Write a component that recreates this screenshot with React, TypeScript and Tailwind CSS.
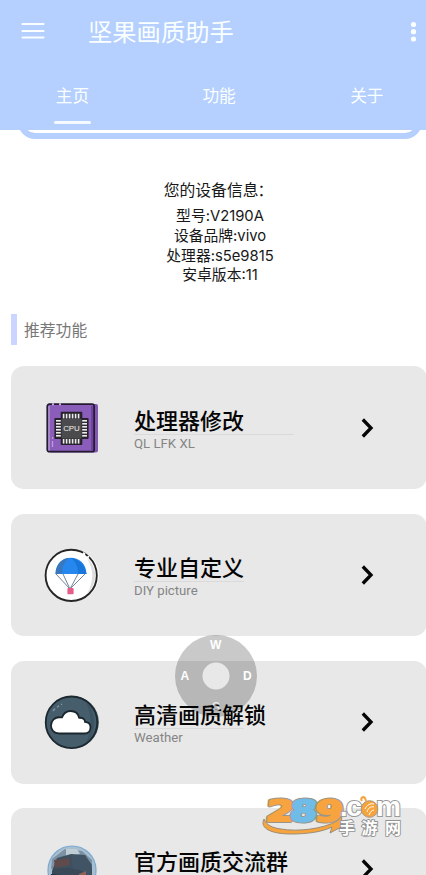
import type { ReactNode } from "react";

const cjk = "font-['Noto_Sans_CJK_SC',sans-serif]";

function CpuIcon() {
  const pins = [0, 1, 2, 3, 4, 5];
  return (
    <svg width="56" height="56" viewBox="0 0 56 56">
      <rect x="5" y="4" width="49" height="48.5" rx="2" fill="#8257b0" />
      <rect x="3.3" y="4.2" width="46.8" height="47.5" rx="2" fill="#8a5dba" stroke="#241b31" strokeWidth="1.8" />
      <path d="M5 6V50.5" stroke="#b29acb" strokeWidth="1.4" />
      <path d="M48 6V50.5" stroke="#7043a0" strokeWidth="2" />
      <path d="M8 4.2h2M15 4.2h2" stroke="#c7a9e6" strokeWidth="2" />
      <path d="M8.5 37v2M8.5 41v6" stroke="#b99bd9" strokeWidth="1.3" />
      <path d="M17.5 12.5h20v6.3h6.3v19.5h-6.3v6h-20v-6h-6.3V18.8h6.3z" fill="#302c35" stroke="#252029" strokeWidth="1.6" strokeLinejoin="round" />
      {pins.map((n) => (
        <g key={n} fill="#ececea">
          <rect x={18.8 + n * 3} y="13.8" width="1.6" height="4.6" />
          <rect x={18.8 + n * 3} y="39" width="1.6" height="4.6" />
          <rect x="12" y={20 + n * 3} width="4.8" height="1.6" />
          <rect x="38.2" y={20 + n * 3} width="4.8" height="1.6" />
        </g>
      ))}
      <rect x="17.6" y="19" width="20" height="19.5" fill="#4b4b4d" />
      <text x="27.5" y="31.2" textAnchor="middle" fontSize="7.9" fontFamily="Liberation Sans" fill="#f4f4f4">CPU</text>
    </svg>
  );
}

function ParachuteIcon() {
  return (
    <svg width="56" height="56" viewBox="0 0 56 56">
      <circle cx="29.5" cy="28.3" r="25.6" fill="#fafafa" />
      <circle cx="27.2" cy="28.4" r="25.6" fill="#fff" stroke="#262626" strokeWidth="1.9" />
      <path d="M43 11c11 10 11 25 0 36 7-13 7-24 0-36Z" fill="#dedede" />
      <path d="m39 6 2 1.6M43.5 9.3l1.2 1.3" stroke="#fff" strokeWidth="2.4" />
      <path d="m12 27 14 15 15-15M19 27l7 15 8-15" fill="none" stroke="#72859c" strokeWidth="1" />
      <path d="M11.5 27C12 5 42 6 42.5 27Z" fill="#2687ee" />
      <path d="M11.5 27C12 15 20 11 25 11c-5 4-7 9-7 16Z" fill="#3a78bd" />
      <path d="M27 11c8 1 14 7 15.5 16H34c0-7-2-12-7-16Z" fill="#1976da" />
      <rect x="23.4" y="41" width="6.2" height="6.2" rx="1" fill="#e75c89" />
    </svg>
  );
}

function CloudIcon() {
  return (
    <svg width="56" height="56" viewBox="0 0 56 56">
      <circle cx="28.8" cy="28.3" r="26.1" fill="#53616b" />
      <circle cx="27.5" cy="28.3" r="25.8" fill="#465d6b" stroke="#1c2930" strokeWidth="1.8" />
      <path d="M42 8c11 10 11 31 0 41 6-13 6-28 0-41Z" fill="#3c5463" />
      <path d="m9 17 2-2.4m2-1.4 2-1.5m2-1 1-.6" stroke="#8199a9" strokeWidth="1.4" />
      <path d="M15 39.5c-5 0-8-3.4-8-8 0-4.8 4-8.6 9-8.2h2c1.6-4.1 4.4-6.3 8.6-6.3 4.6 0 7.8 2.7 8.5 6.8 3.9-.5 5.9 1.8 5.9 4.1 3.6.3 5.5 2.5 5.5 5.4 0 3.7-2.5 6.2-6 6.2Z" fill="#fff" stroke="#1a272e" strokeWidth="1.8" strokeLinejoin="round" />
    </svg>
  );
}

function HelmetIcon() {
  return (
    <svg width="56" height="56" viewBox="0 0 56 56">
      <defs><clipPath id="portrait"><circle cx="28" cy="29" r="24" /></clipPath></defs>
      <g clipPath="url(#portrait)">
        <path fill="#a7bfce" d="M0 0h56v56H0z" />
        <path d="m8 18 13-10 17 2 10 9v9H7z" fill="#7c91a3" />
        <path d="m22 8 11 0 3 5-14 3z" fill="#c0cdd4" />
        <path d="m8 30 5-13 14-4 14 1 7 13v11H8z" fill="#3e505f" />
        <path d="m10 19 15-2 1 7-15 3z" fill="#604b4c" />
        <path d="m27 14 14 0 7 10-2 10-17-6z" fill="#405466" />
        <path d="m9 28 16-1 14 3v4L25 37 8 34z" fill="#394958" />
        <path d="m35 33 7-3v9h-7z" fill="#8c6355" />
        <path d="m7 33 28 3 2 7H5z" fill="#242e38" />
      </g>
      <circle cx="28" cy="29" r="24" fill="none" stroke="#7daad2" strokeWidth="1.2" />
    </svg>
  );
}

type FeatureProps = { title: string; subtitle: string; icon: ReactNode; line?: string };

function FeatureCard({ title, subtitle, icon, line = "w-[110px]" }: FeatureProps) {
  return (
    <button className="flex h-[122.7px] w-[416px] shrink-0 items-center rounded-[13px] bg-[#e8e8e8] text-left">
      <span className="ml-[33px] h-14 w-14 shrink-0">{icon}</span>
      <span className="ml-[34px] flex w-[215px] flex-col pt-[3px]">
        <span className={`${cjk} h-[29px] text-[22px] font-medium leading-[29px] text-[#050505]`}>{title}</span>
        <span className={`${line} h-px bg-[#dadada]`} />
        <span className="h-[19px] font-['Roboto','Liberation_Sans',sans-serif] text-[13.2px] leading-[18px] text-[#858585]">{subtitle}</span>
      </span>
      <svg className="ml-[11px]" width="16" height="22" viewBox="0 0 16 22" fill="none"><path d="m2.8 2.5 8.2 8.5-8.2 8.5" stroke="#050505" strokeWidth="3.3" /></svg>
    </button>
  );
}

function Joystick() {
  return (
    <div className="absolute left-[175px] top-[635px] h-[82px] w-[82px] font-['Liberation_Sans',sans-serif] text-[12px] font-bold leading-3 text-white">
      <svg className="absolute inset-0" width="82" height="82" viewBox="0 0 82 82">
        <path fillRule="evenodd" d="M0 41a41 41 0 1 0 82 0A41 41 0 1 0 0 41Zm27.5 0a13.5 13.5 0 1 1 27 0 13.5 13.5 0 1 1-27 0Z" fill="#000" fillOpacity=".21" />
      </svg>
      <span className="absolute left-[35px] top-[4px]">W</span>
      <span className="absolute left-[5.5px] top-[35px]">A</span>
      <span className="absolute left-[68px] top-[35px]">D</span>
      <span className="absolute left-[37px] top-[66px] opacity-70">S</span>
    </div>
  );
}

function Watermark() {
  const digits = [
    { value: "2", x: 4, width: 28, color: "#f6a340" },
    { value: "8", x: 28, width: 27, color: "#70bce8" },
    { value: "9", x: 53, width: 28, color: "#f6a340" },
  ];
  return (
    <svg className="absolute left-[262px] top-[796px]" width="142" height="42" viewBox="0 0 142 42">
      <path d="M2 23c-5 10 9 15 27 15 16 0 31-2 41-7l-2 6 11-6 1-13-5 7c-14 8-40 11-56 8-8-1-15-4-17-10Z" fill="#f7a43d" stroke="#9b8d7d" strokeWidth="1" />
      <g fontFamily="DejaVu Sans" fontSize="29" fontWeight="bold" transform="translate(2 0) skewX(-6)" strokeLinejoin="round">
        {digits.map(({ value, x, width, color }) => (
          <g key={value}>
            <text x={x} y="25" textLength={width} lengthAdjust="spacingAndGlyphs" fill={color} stroke="#999589" strokeWidth="4">{value}</text>
            <text x={x} y="25" textLength={width} lengthAdjust="spacingAndGlyphs" fill={color} stroke={color} strokeWidth="2.2">{value}</text>
          </g>
        ))}
      </g>
      <g fontFamily="Liberation Sans" fontWeight="bold" fontSize="27" fill="#fff" stroke="#9b9b9b" strokeWidth="2" paintOrder="stroke">
        <text x="78" y="20">.</text><text x="84" y="20" textLength="16" lengthAdjust="spacingAndGlyphs">c</text>
        <text x="114" y="20" textLength="25" lengthAdjust="spacingAndGlyphs">m</text>
      </g>
      <circle cx="107.5" cy="13" r="8.3" fill="#f5a33b" stroke="#aa967b" strokeWidth="1" />
      <path d="M100 5c-2-3 1-5 3-3l1 3" fill="none" stroke="#f5a33b" strokeWidth="2" />
      <path d="M103 13c2-4 5-6 9-5m-7 8c1-4 4-6 7-5m-5 8c1-3 3-5 5-5" fill="none" stroke="#fff" strokeWidth="1" />
      <g fontFamily="Noto Sans CJK SC" fontSize="16" fontWeight="700" fill="#fff" stroke="#929292" strokeWidth="1.8" paintOrder="stroke">
        <text x="77" y="38">手</text><text x="99.5" y="38">游</text><text x="123" y="38">网</text>
      </g>
    </svg>
  );
}

export default function App() {
  return (
    <div className={`${cjk} relative h-[875px] w-[426px] overflow-hidden bg-white`}>
      <header className="h-[130px] bg-[#b5cfff] text-[#faffff]">
        <div className="flex h-16 items-center">
          <svg className="-mt-[2px] ml-[21px]" width="24" height="18" viewBox="0 0 24 18"><path d="M1.5 2h21M1.5 9h21M1.5 15.5h21" stroke="currentColor" strokeWidth="2.1" strokeLinecap="round" /></svg>
          <h1 className="-mt-[2px] ml-[43px] flex-1 text-[24.3px] font-normal leading-[30px]">坚果画质助手</h1>
          <svg className="-mt-px mr-[9px]" width="7" height="22" viewBox="0 0 7 22" fill="currentColor"><circle cx="3.5" cy="3.5" r="2.6" /><circle cx="3.5" cy="10.7" r="2.6" /><circle cx="3.5" cy="18" r="2.6" /></svg>
        </div>
        <nav className="flex h-[66px] justify-between pl-[54px] pr-[42.5px] pt-[19px] text-[16.7px] leading-6">
          <div className="flex w-[37px] flex-col items-center"><span className="whitespace-nowrap">主页</span><i className="mt-[14px] h-[3px] w-[37px] rounded-full bg-[#f4faff]" /></div>
          <span className="-ml-[3px]">功能</span><span>关于</span>
        </nav>
      </header>
      <div className="ml-[18px] h-[9px] w-[404px] overflow-hidden">
        <div className="-mt-[31px] h-10 rounded-[17px] border-[6px] border-[#b5cfff] bg-white" />
      </div>
      <section className="mt-[40px] flex h-[107px] flex-col items-center pl-1 text-[#181818]">
        <h2 className="ml-[7px] h-[29.5px] text-[15.8px] font-normal leading-[22px]">您的设备信息<span className="-ml-px">：</span></h2>
        <div className="pl-[10px] text-center font-['Inter','Noto_Sans_CJK_SC',sans-serif] text-[14.8px] leading-[19.7px]">
          <p>型号:V2190A</p><p>设备品牌:vivo</p><p>处理器:s5e9815</p><p>安卓版本:11</p>
        </div>
      </section>
      <div className="ml-[11px] mt-[28px] flex h-[31px] items-center gap-[7px]">
        <span className="h-full w-[6px] bg-[#cbd5ff]" /><h2 className="text-[15.8px] font-normal text-[#777]">推荐功能</h2>
      </div>
      <main className="ml-[11px] mt-[21.3px] flex w-[416px] flex-col gap-[24.6px]">
        <FeatureCard title="处理器修改" subtitle="QL LFK XL" icon={<CpuIcon />} line="w-[160px]" />
        <FeatureCard title="专业自定义" subtitle="DIY picture" icon={<ParachuteIcon />} />
        <FeatureCard title="高清画质解锁" subtitle="Weather" icon={<CloudIcon />} />
        <FeatureCard title="官方画质交流群" subtitle="" icon={<HelmetIcon />} />
      </main>
      <Joystick />
      <Watermark />
    </div>
  );
}
